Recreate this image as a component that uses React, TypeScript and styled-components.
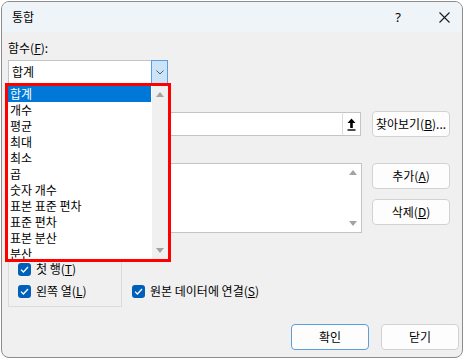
import React from "react";
import styled, { createGlobalStyle } from "styled-components";

const GlobalStyle = createGlobalStyle`
  html, body {
    margin: 0;
    padding: 0;
    background: #ffffff;
  }
  body {
    font-family: "Noto Sans CJK KR", "Noto Sans", sans-serif;
    font-size: 12px;
    color: #000000;
  }
`;

const Dialog = styled.div`
  margin: 1px 0 0 1px;
  width: 462px;
  height: 357px;
  box-sizing: border-box;
  border: 1px solid #8c8c8c;
  border-radius: 8px;
  background: #f0f0f0;
  overflow: hidden;
  display: flex;
  flex-direction: column;
`;

const TitleBar = styled.div`
  height: 30px;
  flex-shrink: 0;
  background: #eef4f7;
  display: flex;
  align-items: center;
  padding: 0 3px 0 10px;
`;

const Title = styled.div`
  flex: 1;
  font-size: 12px;
  line-height: 16px;
`;

const TitleButton = styled.div`
  width: 30px;
  height: 30px;
  display: flex;
  align-items: center;
  justify-content: center;
  font-family: "Noto Sans", sans-serif;
  font-size: 13px;
  & + & {
    margin-left: 16px;
  }
`;

const Content = styled.div`
  padding: 8px 3px 0 6px;
  display: flex;
  flex-direction: column;
`;

const Label = styled.div<{ $gap: number }>`
  height: 16px;
  line-height: 16px;
  margin-top: ${(p) => p.$gap}px;
`;

const ComboWrap = styled.div`
  position: relative;
  width: 160px;
  height: 24px;
  margin-top: 4px;
  z-index: 2;
`;

const Combo = styled.div`
  box-sizing: border-box;
  height: 24px;
  display: flex;
  background: #ffffff;
  border: 1px solid #c4c4c4;
`;

const ComboText = styled.div`
  flex: 1;
  padding-left: 3px;
  line-height: 22px;
`;

const ComboButton = styled.div`
  box-sizing: border-box;
  width: 17px;
  margin: -1px -1px -1px 0;
  background: #cce4f7;
  border: 1px solid #5a9ee2;
  display: flex;
  align-items: center;
  justify-content: center;
`;

const DropList = styled.div`
  position: absolute;
  left: -3px;
  top: 23px;
  width: 166px;
  height: 179px;
  box-sizing: border-box;
  border: 3px solid #ff0000;
  background: #ffffff;
  display: flex;
  overflow: hidden;
`;

const Items = styled.div`
  flex: 1;
  margin-right: 1px;
`;

const Item = styled.div<{ $selected?: boolean }>`
  height: 16px;
  line-height: 16px;
  padding-left: 2px;
  white-space: pre;
  background: ${(p) => (p.$selected ? "#0078d7" : "transparent")};
  color: ${(p) => (p.$selected ? "#ffffff" : "#000000")};
`;

const ScrollBar = styled.div<{ $bg: string }>`
  width: 16px;
  flex-shrink: 0;
  background: ${(p) => p.$bg};
  display: flex;
  flex-direction: column;
  justify-content: space-between;
  align-items: center;
  padding: 6px 0;
`;

const Row = styled.div<{ $gap: number }>`
  display: flex;
  margin-top: ${(p) => p.$gap}px;
`;

const RefField = styled.div`
  box-sizing: border-box;
  width: 353px;
  height: 24px;
  margin-top: 1px;
  background: #ffffff;
  border: 1px solid #c4c4c4;
  display: flex;
  justify-content: flex-end;
`;

const PickButton = styled.div`
  box-sizing: border-box;
  width: 18px;
  height: 22px;
  border-left: 1px solid #dadada;
  border-radius: 2px;
  display: flex;
  align-items: center;
  justify-content: center;
`;

const RefList = styled.div`
  box-sizing: border-box;
  width: 354px;
  height: 70px;
  background: #ffffff;
  border: 1px solid #c4c4c4;
  display: flex;
  justify-content: flex-end;
`;

const SideButtons = styled.div`
  display: flex;
  flex-direction: column;
  gap: 10px;
  margin-left: 10px;
`;

const Button = styled.div<{ $default?: boolean }>`
  box-sizing: border-box;
  width: 78px;
  height: 26px;
  background: #fdfdfd;
  border: 1px solid ${(p) => (p.$default ? "#5c9fdc" : "#d2d2d2")};
  border-radius: 4px;
  display: flex;
  align-items: center;
  justify-content: center;
  line-height: 16px;
`;

const BrowseButton = styled(Button)`
  margin-left: 11px;
`;

const BottomArea = styled.div`
  display: flex;
  margin-top: 17px;
`;

const GroupBox = styled.div`
  box-sizing: border-box;
  width: 114px;
  height: 57px;
  border: 1px solid #dcdcdc;
  display: flex;
  flex-direction: column;
  gap: 6px;
  padding: 0 0 0 9px;
`;

const Legend = styled.div`
  align-self: flex-start;
  height: 16px;
  line-height: 16px;
  margin: -8px 0 -4px -2px;
  padding: 0 2px;
  background: #f0f0f0;
`;

const CheckRow = styled.div`
  display: flex;
  align-items: center;
  gap: 5px;
  height: 16px;
  line-height: 16px;
`;

const LinkRow = styled(CheckRow)`
  align-self: flex-end;
  margin: 0 0 8px 10px;
`;

const Box = styled.div`
  box-sizing: border-box;
  width: 13px;
  height: 13px;
  border-radius: 3px;
  background: #005fb8;
  display: flex;
  align-items: center;
  justify-content: center;
`;

const Footer = styled.div`
  display: flex;
  justify-content: flex-end;
  gap: 12px;
  margin-top: 17px;
`;

const Tri = ({ down }: { down?: boolean }) => (
  <svg width="8" height="5" viewBox="0 0 8 5">
    <polygon points={down ? "0,0 8,0 4,5" : "0,5 8,5 4,0"} fill="#a3a3a3" />
  </svg>
);

const Check = () => (
  <svg width="9" height="7" viewBox="0 0 9 7">
    <polyline points="1,3.6 3.4,6 8,1" fill="none" stroke="#ffffff" strokeWidth="1.3" />
  </svg>
);

const CheckBox = ({ children }: { children: React.ReactNode }) => (
  <>
    <Box>
      <Check />
    </Box>
    <span>{children}</span>
  </>
);

const functions = [
  "합계",
  "개수",
  "평균",
  "최대",
  "최소",
  "곱",
  "숫자 개수",
  "표본 표준 편차",
  "표준 편차",
  "표본 분산",
  "분산",
];

export default function App() {
  return (
    <>
      <GlobalStyle />
      <Dialog>
        <TitleBar>
          <Title>통합</Title>
          <TitleButton>?</TitleButton>
          <TitleButton>
            <svg width="11" height="11" viewBox="0 0 11 11">
              <path d="M0.5 0.5 L10.5 10.5 M10.5 0.5 L0.5 10.5" stroke="#1a1a1a" strokeWidth="1.1" />
            </svg>
          </TitleButton>
        </TitleBar>
        <Content>
          <Label $gap={0}>
            함수(<u>F</u>):
          </Label>
          <ComboWrap>
            <Combo>
              <ComboText>합계</ComboText>
              <ComboButton>
                <svg width="8" height="5" viewBox="0 0 8 5">
                  <polyline points="0.5,0.5 4,4 7.5,0.5" fill="none" stroke="#5a5a5a" strokeWidth="1" />
                </svg>
              </ComboButton>
            </Combo>
            <DropList>
              <Items>
                {functions.map((f, i) => (
                  <Item key={f} $selected={i === 0}>
                    {f}
                  </Item>
                ))}
              </Items>
              <ScrollBar $bg="#f0f0f0">
                <Tri />
                <Tri down />
              </ScrollBar>
            </DropList>
          </ComboWrap>
          <Label $gap={10}>
            참조(<u>R</u>):
          </Label>
          <Row $gap={1}>
            <RefField>
              <PickButton>
                <svg width="9" height="13" viewBox="0 0 9 13">
                  <polygon points="4.5,0.5 8.5,5 5.8,5 5.8,10 3.2,10 3.2,5 0.5,5" fill="#000000" />
                  <rect x="0.5" y="11.3" width="8" height="1.4" fill="#000000" />
                </svg>
              </PickButton>
            </RefField>
            <BrowseButton>
              찾아보기(<u>B</u>)...
            </BrowseButton>
          </Row>
          <Label $gap={8}>
            모든 참조 영역(<u>E</u>):
          </Label>
          <Row $gap={2}>
            <RefList>
              <ScrollBar $bg="#ffffff">
                <Tri />
                <Tri down />
              </ScrollBar>
            </RefList>
            <SideButtons>
              <Button>
                추가(<u>A</u>)
              </Button>
              <Button>
                삭제(<u>D</u>)
              </Button>
            </SideButtons>
          </Row>
          <BottomArea>
            <GroupBox>
              <Legend>사용할 레이블</Legend>
              <CheckRow>
                <CheckBox>
                  첫 행(<u>T</u>)
                </CheckBox>
              </CheckRow>
              <CheckRow>
                <CheckBox>
                  왼쪽 열(<u>L</u>)
                </CheckBox>
              </CheckRow>
            </GroupBox>
            <LinkRow>
              <CheckBox>
                원본 데이터에 연결(<u>S</u>)
              </CheckBox>
            </LinkRow>
          </BottomArea>
          <Footer>
            <Button $default>확인</Button>
            <Button>닫기</Button>
          </Footer>
        </Content>
      </Dialog>
    </>
  );
}
